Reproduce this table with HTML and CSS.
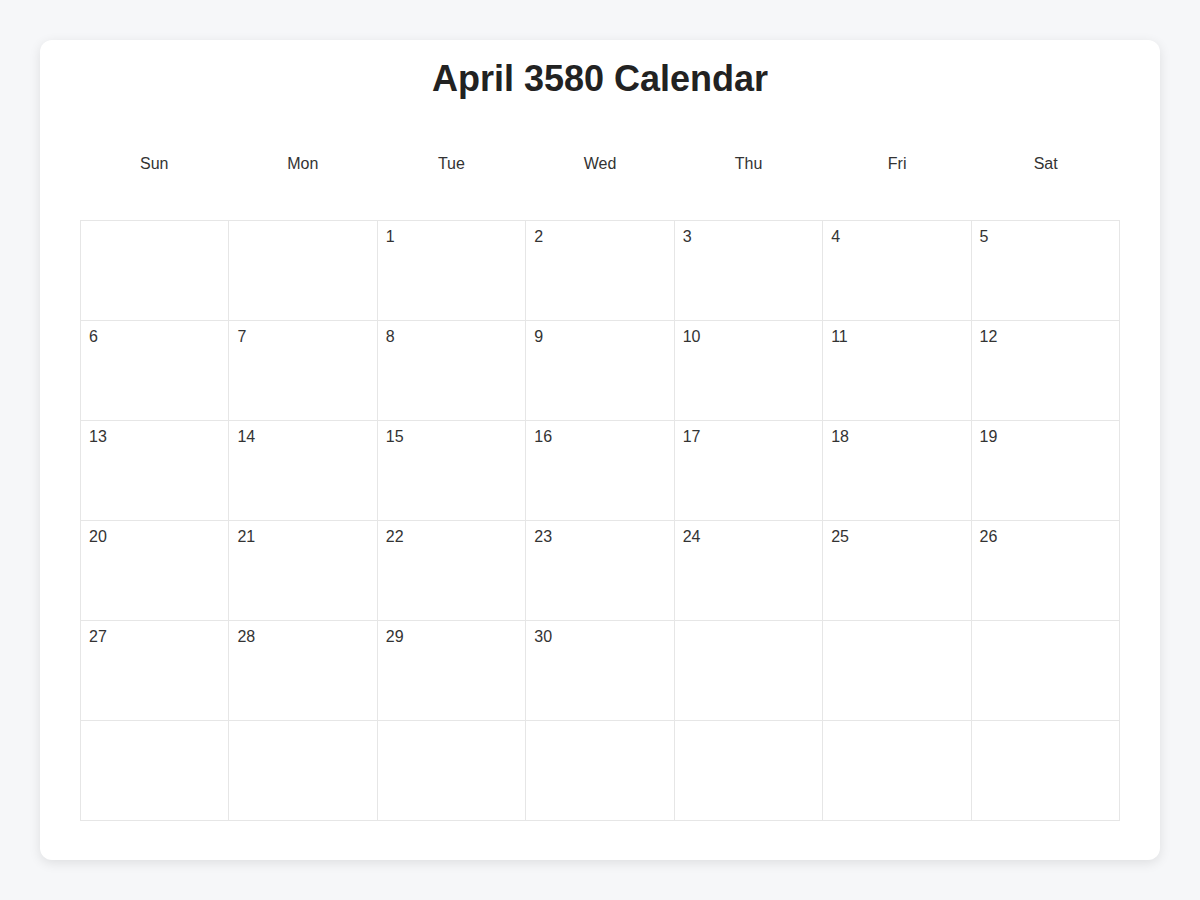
FILE: index.html
```html
<!DOCTYPE html>
<html>
<head>
<meta charset="utf-8">
<link rel="stylesheet" href="styles.css">
</head>
<body>
<div class="card">
  <h1 class="title">April 3580 Calendar</h1>
  <div class="weekdays">
    <div>Sun</div><div>Mon</div><div>Tue</div><div>Wed</div><div>Thu</div><div>Fri</div><div>Sat</div>
  </div>
  <div class="grid">
    <div class="cell"></div><div class="cell"></div><div class="cell">1</div><div class="cell">2</div><div class="cell">3</div><div class="cell">4</div><div class="cell">5</div>
    <div class="cell">6</div><div class="cell">7</div><div class="cell">8</div><div class="cell">9</div><div class="cell">10</div><div class="cell">11</div><div class="cell">12</div>
    <div class="cell">13</div><div class="cell">14</div><div class="cell">15</div><div class="cell">16</div><div class="cell">17</div><div class="cell">18</div><div class="cell">19</div>
    <div class="cell">20</div><div class="cell">21</div><div class="cell">22</div><div class="cell">23</div><div class="cell">24</div><div class="cell">25</div><div class="cell">26</div>
    <div class="cell">27</div><div class="cell">28</div><div class="cell">29</div><div class="cell">30</div><div class="cell"></div><div class="cell"></div><div class="cell"></div>
    <div class="cell"></div><div class="cell"></div><div class="cell"></div><div class="cell"></div><div class="cell"></div><div class="cell"></div><div class="cell"></div>
  </div>
</div>
</body>
</html>
```
FILE: styles.css
```css
html, body {
  margin: 0;
  padding: 0;
}
body {
  background: #f6f7f9;
  font-family: "Liberation Sans", Arial, sans-serif;
  color: #333;
  padding: 40px;
}
.card {
  background: #fff;
  border-radius: 12px;
  box-shadow: 0 3px 12px rgba(0, 0, 0, 0.1);
  padding: 18px 40px 40px;
  height: 820px;
  box-sizing: border-box;
}
.title {
  margin: 0;
  font-size: 36px;
  line-height: 41px;
  font-weight: bold;
  color: #222;
  text-align: center;
}
.weekdays {
  display: grid;
  grid-template-columns: repeat(7, 1fr);
  margin-top: 28px;
  font-size: 16px;
  line-height: 18px;
  color: #333;
  text-align: center;
}
.weekdays div {
  padding: 28px 0 26px;
}
.grid {
  display: grid;
  grid-template-columns: repeat(7, 1fr);
  grid-auto-rows: 100px;
  margin-top: 21px;
  border-top: 1px solid #e6e6e6;
  border-left: 1px solid #e6e6e6;
}
.cell {
  border-right: 1px solid #e6e6e6;
  border-bottom: 1px solid #e6e6e6;
  padding: 6px 8px 4px;
  font-size: 16px;
  line-height: 20px;
  color: #333;
}
```
